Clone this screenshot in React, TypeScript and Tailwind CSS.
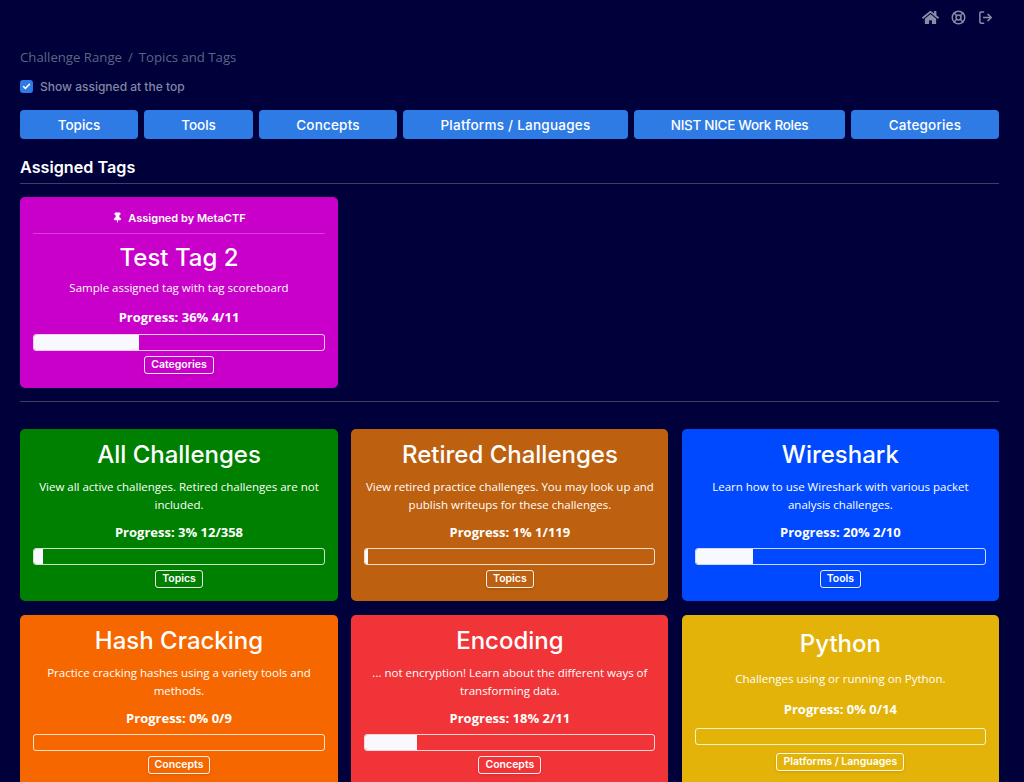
import { LifeBuoy, LogOut, Pin, Check } from "lucide-react";
import { FaHome } from "react-icons/fa";

const HEAD = "font-['Inter','Noto_Sans',sans-serif]";
const BODY = "font-['Open_Sans',sans-serif]";

const TABS = [
  { label: "Topics", cls: "w-[118px]" },
  { label: "Tools", cls: "w-[109px]" },
  { label: "Concepts", cls: "w-[138px] tracking-[0.2px]" },
  { label: "Platforms / Languages", cls: "w-[225px] tracking-[0.25px]" },
  { label: "NIST NICE Work Roles", cls: "w-[211px] tracking-[-0.3px]" },
  { label: "Categories", cls: "w-[148px] tracking-[0.2px]" },
];

const CARDS = [
  { title: "All Challenges", text: "View all active challenges. Retired challenges are not included.", progress: "Progress: 3% 12/358", bar: "w-[3%]", tag: "Topics", bg: "bg-[#008000]" },
  { title: "Retired Challenges", text: "View retired practice challenges. You may look up and publish writeups for these challenges.", progress: "Progress: 1% 1/119", bar: "w-[1%]", tag: "Topics", bg: "bg-[#bd6010]" },
  { title: "Wireshark", text: "Learn how to use Wireshark with various packet analysis challenges.", progress: "Progress: 20% 2/10", bar: "w-[19.7%]", tag: "Tools", bg: "bg-[#0049ff]" },
  { title: "Hash Cracking", text: "Practice cracking hashes using a variety tools and methods.", progress: "Progress: 0% 0/9", bar: "w-0", tag: "Concepts", bg: "bg-[#f76700]" },
  { title: "Encoding", text: "... not encryption! Learn about the different ways of transforming data.", progress: "Progress: 18% 2/11", bar: "w-[18%]", tag: "Concepts", bg: "bg-[#f13438]" },
  { title: "Python", text: "Challenges using or running on Python.", progress: "Progress: 0% 0/14", bar: "w-0", tag: "Platforms / Languages", bg: "bg-[#e3b309]" },
];

function TagCard({ card, pinned }: { card: (typeof CARDS)[number]; pinned?: boolean }) {
  return (
    <div className={`flex flex-col justify-evenly rounded-[5px] px-[13px] text-center text-white ${card.bg} ${pinned ? "pb-[14px] pt-[13px]" : "pb-[13px] pt-[7px]"}`}>
      {pinned && (
        <div className={`flex h-[24px] items-start justify-center gap-[5px] border-b border-white/25 text-[11px] font-semibold leading-[16px] ${HEAD}`}>
          <Pin size={11} fill="currentColor" className="mt-[2px]" />
          Assigned by MetaCTF
        </div>
      )}
      <h3 className={`text-[24px] font-medium leading-[34px] ${HEAD} ${pinned ? "mt-[7px]" : "mt-[2px]"}`}>{card.title}</h3>
      <p className={`text-[11.5px] leading-[18px] ${BODY} ${pinned ? "mt-[4px]" : "mt-[6px]"}`}>{card.text}</p>
      <div className={`text-[13px] font-bold leading-[20px] ${BODY} ${pinned ? "mt-[10px]" : "mt-[8.2px]"}`}>{card.progress}</div>
      <div className={`h-[17px] overflow-hidden rounded-[3px] border border-white/80 ${pinned ? "mt-[7px]" : "mt-[6px]"}`}>
        <div className={`h-full bg-[#f8f9fe] ${card.bar}`} />
      </div>
      <div className="mt-[5px] flex justify-center">
        <span className={`rounded-[3px] border border-white/90 px-[6px] text-[10.5px] font-semibold leading-[16px] shadow-sm ${HEAD}`}>{card.tag}</span>
      </div>
    </div>
  );
}

export default function App() {
  return (
    <div className={`h-[782px] overflow-hidden bg-[#00003a] pl-5 pr-[25px] ${BODY}`}>
      <div className="flex h-[35px] items-center justify-end gap-[12px] text-[#8b8ca8]">
        <FaHome size={17} />
        <LifeBuoy size={15} strokeWidth={2.4} />
        <LogOut size={15} strokeWidth={2.4} className="mr-[6px]" />
      </div>
      <div className="mt-[13px] flex h-[20px] items-center text-[13.2px] text-[#5c6584]">
        <span>Challenge Range</span>
        <span className="px-[6px]">/</span>
        <span>Topics and Tags</span>
      </div>
      <label className={`mt-[11px] flex h-[15px] items-center gap-[7px] text-[12px] font-medium text-[#8088a3] ${HEAD}`}>
        <span className="grid h-[13px] w-[13px] place-items-center rounded-[3px] bg-[#2e7be6] text-white">
          <Check size={9} strokeWidth={4} />
        </span>
        Show assigned at the top
      </label>
      <div className="mt-[16px] flex gap-[6px]">
        {TABS.map((t) => (
          <button key={t.label} className={`h-[29px] rounded-[4px] bg-[#2e7be6] pt-[1px] text-[13.5px] font-medium text-white ${t.cls} ${HEAD}`}>
            {t.label}
          </button>
        ))}
      </div>
      <h2 className={`mt-[17px] h-[27px] text-[16.2px] font-semibold leading-[23px] text-white ${HEAD}`}>Assigned Tags</h2>
      <div className="h-px bg-[#3d3f63]" />
      <div className="mt-[13px] w-[318px]">
        <TagCard
          pinned
          card={{ title: "Test Tag 2", text: "Sample assigned tag with tag scoreboard", progress: "Progress: 36% 4/11", bar: "w-[36.2%]", tag: "Categories", bg: "bg-[#c900c9]" }}
        />
      </div>
      <div className="mt-[13px] h-px bg-[#3d3f63]" />
      <div className="mt-[27px] grid grid-cols-[318px_317px_1fr] gap-x-[13.4px] gap-y-[14.1px]">
        {CARDS.map((c) => (
          <TagCard key={c.title} card={c} />
        ))}
      </div>
    </div>
  );
}
